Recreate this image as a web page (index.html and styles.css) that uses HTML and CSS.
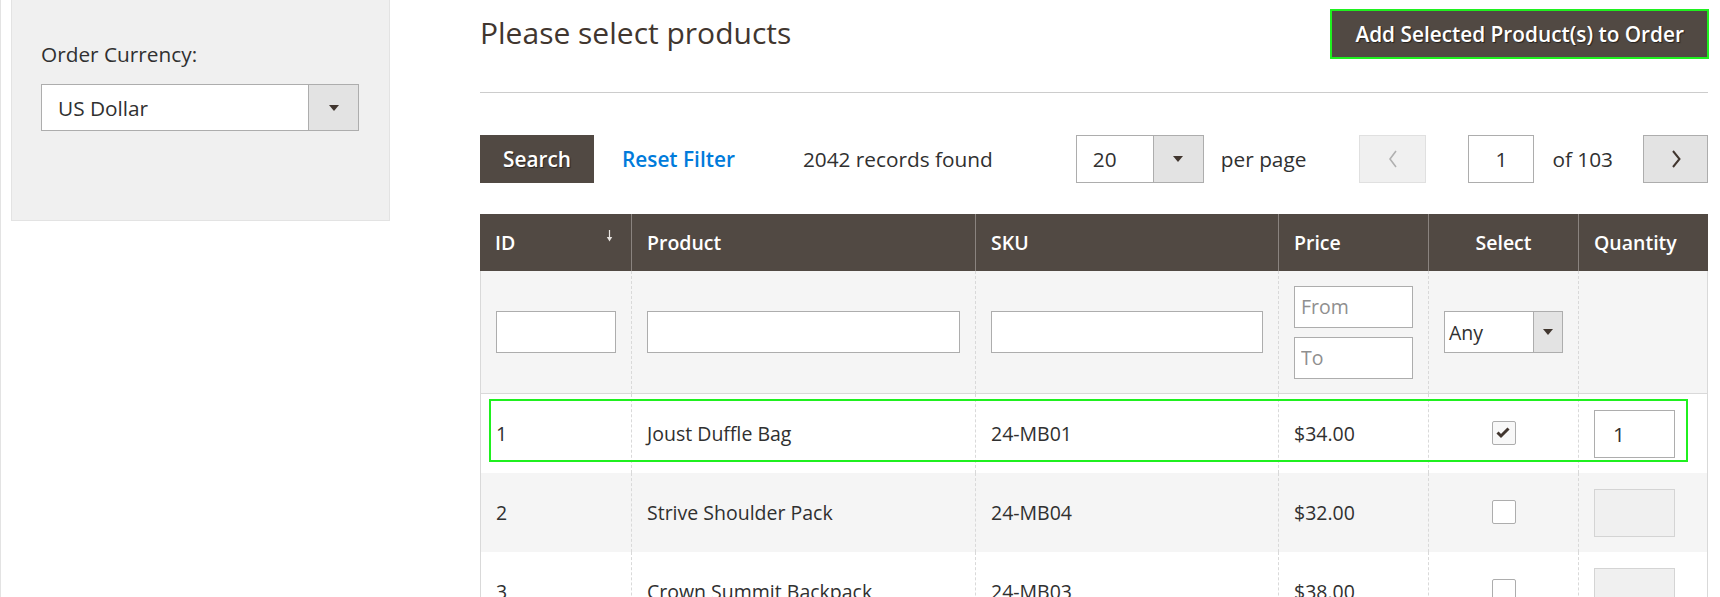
FILE: index.html
```html
<!DOCTYPE html>
<html lang="en">
<head>
<meta charset="utf-8">
<title>Please select products</title>
<link rel="stylesheet" href="styles.css">
</head>
<body>
<div class="page">
  <aside class="sidebar">
    <div class="panel">
      <label class="field-label">Order Currency:</label>
      <div class="select select-currency">
        <span class="select-value">US Dollar</span>
        <span class="select-arrow"><svg width="10" height="6" viewBox="0 0 10 6"><polygon points="0,0 10,0 5,6" fill="#41362f"/></svg></span>
      </div>
    </div>
  </aside>
  <main class="main">
    <div class="title-row">
      <h2 class="page-title">Please select products</h2>
      <button class="btn btn-primary btn-add">Add Selected Product(s) to Order</button>
    </div>
    <hr class="divider">
    <div class="toolbar">
      <div class="toolbar-left">
        <button class="btn btn-primary btn-search">Search</button>
        <a class="reset-link">Reset Filter</a>
        <span class="records">2042 records found</span>
      </div>
      <div class="toolbar-right">
        <div class="select select-perpage">
          <span class="select-value">20</span>
          <span class="select-arrow"><svg width="10" height="6" viewBox="0 0 10 6"><polygon points="0,0 10,0 5,6" fill="#41362f"/></svg></span>
        </div>
        <span class="per-page">per page</span>
        <button class="pager-btn pager-prev" disabled><svg width="10" height="18" viewBox="0 0 10 18"><polyline points="8,1 2,9 8,17" fill="none" stroke="#b0b0b0" stroke-width="1.6"/></svg></button>
        <input class="page-input" value="1">
        <span class="page-total">of 103</span>
        <button class="pager-btn pager-next"><svg width="10" height="18" viewBox="0 0 10 18"><polyline points="2,1 8.5,9 2,17" fill="none" stroke="#41362f" stroke-width="2"/></svg></button>
      </div>
    </div>
    <div class="grid-wrap">
      <table class="grid">
        <thead>
          <tr>
            <th class="col-id">ID<span class="sort-arrow"><svg width="7" height="12" viewBox="0 0 7 12"><line x1="3.5" y1="0" x2="3.5" y2="8" stroke="#e8e4e1" stroke-width="1.2"/><polygon points="0.8,7 6.2,7 3.5,11.5" fill="#e8e4e1"/></svg></span></th>
            <th class="col-product">Product</th>
            <th class="col-sku">SKU</th>
            <th class="col-price">Price</th>
            <th class="col-select center">Select</th>
            <th class="col-qty">Quantity</th>
          </tr>
        </thead>
        <tbody>
          <tr class="filters">
            <td><input class="text-input filter-input"></td>
            <td><input class="text-input filter-input"></td>
            <td><input class="text-input filter-input"></td>
            <td>
              <div class="range">
                <input class="text-input range-input" placeholder="From">
                <input class="text-input range-input" placeholder="To">
              </div>
            </td>
            <td>
              <div class="select select-any">
                <span class="select-value">Any</span>
                <span class="select-arrow"><svg width="10" height="6" viewBox="0 0 10 6"><polygon points="0,0 10,0 5,6" fill="#41362f"/></svg></span>
              </div>
            </td>
            <td></td>
          </tr>
          <tr class="row">
            <td>1</td>
            <td>Joust Duffle Bag</td>
            <td>24-MB01</td>
            <td>$34.00</td>
            <td class="center"><span class="checkbox checked"><svg width="22" height="22" viewBox="0 0 22 22"><polyline points="4.5,10.5 8,14 15.5,6.5" fill="none" stroke="#41362f" stroke-width="3"/></svg></span></td>
            <td><input class="text-input qty-input" value="1"></td>
          </tr>
          <tr class="row row-alt">
            <td>2</td>
            <td>Strive Shoulder Pack</td>
            <td>24-MB04</td>
            <td>$32.00</td>
            <td class="center"><span class="checkbox"></span></td>
            <td><input class="text-input qty-input" disabled></td>
          </tr>
          <tr class="row">
            <td>3</td>
            <td>Crown Summit Backpack</td>
            <td>24-MB03</td>
            <td>$38.00</td>
            <td class="center"><span class="checkbox"></span></td>
            <td><input class="text-input qty-input" disabled></td>
          </tr>
        </tbody>
      </table>
      <div class="highlight"></div>
    </div>
  </main>
</div>
</body>
</html>
```

FILE: styles.css
```css
html, body {
  margin: 0;
  padding: 0;
  background: #ffffff;
}

body {
  font-family: "Open Sans", "DejaVu Sans", sans-serif;
  font-size: 20.8px;
  color: #303030;
  overflow: hidden;
}

.page {
  display: flex;
  align-items: flex-start;
  min-height: 100vh;
  box-sizing: border-box;
  border-left: 1px solid #e3e3e3;
}

/* Sidebar */
.sidebar {
  flex: none;
  width: 379px;
  margin-left: 10px;
}

.panel {
  box-sizing: border-box;
  height: 221px;
  background: #f0f0f0;
  border: 1px solid #e3e3e3;
  border-top: 0;
  padding: 40px 29px 0;
}

.field-label {
  display: block;
  line-height: 28px;
  color: #303030;
}

/* Select */
.select {
  display: flex;
  box-sizing: border-box;
  border: 1px solid #adadad;
  background: #ffffff;
}

.select-value {
  flex: 1;
  display: flex;
  align-items: center;
  min-width: 0;
}

.select-arrow {
  flex: none;
  display: flex;
  align-items: center;
  justify-content: center;
  background: #e3e3e3;
  border-left: 1px solid #adadad;
}

.select-currency {
  width: 318px;
  height: 47px;
  margin-top: 16px;
}

.select-currency .select-value {
  padding-left: 16px;
}

.select-currency .select-arrow {
  width: 49px;
}

.select-perpage {
  width: 128px;
  height: 48px;
}

.select-perpage .select-value {
  padding-left: 16px;
}

.select-perpage .select-arrow {
  width: 49px;
}

.select-any {
  width: 119px;
  height: 42px;
  font-size: 19.5px;
}

.select-any .select-value {
  padding-left: 4px;
}

.select-any .select-arrow {
  width: 28px;
}

/* Main */
.main {
  flex: none;
  width: 1228px;
  margin-left: 90px;
  padding-top: 10px;
}

.title-row {
  display: flex;
  align-items: center;
  justify-content: space-between;
  height: 48px;
}

.page-title {
  margin: 0;
  font-size: 30px;
  font-weight: 400;
  line-height: 1.2;
  padding-bottom: 3px;
  color: #41362f;
}

.btn {
  font-family: "Open Sans", "DejaVu Sans", sans-serif;
  font-size: 20.8px;
  font-weight: 600;
  cursor: pointer;
  box-sizing: border-box;
}

.btn-primary {
  background: #514943;
  border: 1px solid #514943;
  color: #ffffff;
  text-shadow: 1px 1px 1px rgba(0, 0, 0, 0.55);
}

.btn-add {
  height: 48px;
  padding: 0 23px;
  outline: 2px solid #1ff01f;
  outline-offset: -1px;
}

.divider {
  border: 0;
  border-top: 1px solid #cccccc;
  margin: 34px 0 0;
  height: 0;
}

/* Toolbar */
.toolbar {
  display: flex;
  align-items: center;
  height: 48px;
  margin-top: 42px;
}

.toolbar-left {
  display: flex;
  align-items: center;
}

.btn-search {
  height: 48px;
  padding: 0 22px;
}

.reset-link {
  margin-left: 28px;
  color: #007bdb;
  font-weight: 600;
  cursor: pointer;
}

.records {
  margin-left: 68px;
}

.toolbar-right {
  margin-left: auto;
  display: flex;
  align-items: center;
}

.per-page {
  margin-left: 17px;
}

.pager-btn {
  display: flex;
  align-items: center;
  justify-content: center;
  box-sizing: border-box;
  height: 48px;
  padding: 0;
}

.pager-prev {
  margin-left: 53px;
  width: 67px;
  background: #f0f0f0;
  border: 1px solid #e0e0e0;
}

.pager-next {
  margin-left: 30px;
  width: 65px;
  background: #e3e3e3;
  border: 1px solid #adadad;
}

.page-input {
  margin-left: 42px;
  width: 66px;
  height: 48px;
  box-sizing: border-box;
  border: 1px solid #adadad;
  text-align: center;
  font-family: "Open Sans", "DejaVu Sans", sans-serif;
  font-size: 20.8px;
  color: #303030;
  padding: 0;
}

.page-total {
  margin-left: 18px;
}

/* Grid */
.grid-wrap {
  position: relative;
  margin-top: 31px;
}

.grid {
  width: 1228px;
  table-layout: fixed;
  border-collapse: separate;
  border-spacing: 0;
  font-size: 19.5px;
}

.grid th,
.grid td {
  box-sizing: border-box;
  padding: 0 15px;
  vertical-align: middle;
  text-align: left;
}

.grid th {
  height: 57px;
  background: #514943;
  color: #ffffff;
  font-weight: 600;
  border-left: 1px solid #8a837f;
  white-space: nowrap;
}

.grid th:first-child {
  border-left: 0;
}

.grid th.center,
.grid td.center {
  text-align: center;
}

.col-id { width: 151px; }
.col-product { width: 344px; }
.col-sku { width: 303px; }
.col-price { width: 150px; }
.col-select { width: 150px; }
.col-qty { width: 130px; }

.sort-arrow {
  float: right;
  margin-right: 3px;
  margin-top: 1px;
  line-height: 0;
}

.grid td {
  border-left: 1px dashed #d9d9d9;
  color: #303030;
}

.grid td:first-child {
  border-left: 1px solid #d9d9d9;
}

.grid td:last-child {
  border-right: 1px solid #d9d9d9;
}

.filters td {
  height: 123px;
  background: #f5f5f5;
  border-bottom: 1px solid #d9d9d9;
}

.row td {
  height: 79px;
  background: #ffffff;
}

.row-alt td {
  background: #f5f5f5;
}

.text-input {
  display: block;
  box-sizing: border-box;
  border: 1px solid #adadad;
  background: #ffffff;
  font-family: "Open Sans", "DejaVu Sans", sans-serif;
  font-size: 19.5px;
  color: #303030;
  margin: 0;
}

.filter-input {
  width: 100%;
  height: 42px;
  padding: 0 6px;
}

.range {
  display: flex;
  flex-direction: column;
  gap: 9px;
}

.range-input {
  width: 100%;
  height: 42px;
  padding: 0 6px;
}

.range-input::placeholder {
  color: #8f8f8f;
}

.checkbox {
  display: inline-flex;
  align-items: center;
  justify-content: center;
  box-sizing: border-box;
  width: 24px;
  height: 24px;
  border: 1px solid #adadad;
  border-radius: 2px;
  background: #ffffff;
  vertical-align: middle;
  margin-top: -5px;
}

.checkbox.checked {
  background: #f8f8f8;
}

.qty-input {
  width: 81px;
  height: 48px;
  padding: 0 18px;
  font-size: 20.8px;
}

.qty-input:disabled {
  background: #f0f0f0;
  border-color: #d4d4d4;
}

.highlight {
  position: absolute;
  top: 185px;
  left: 9px;
  width: 1199px;
  height: 63px;
  box-sizing: border-box;
  border: 2px solid #1ff01f;
  pointer-events: none;
}
```
